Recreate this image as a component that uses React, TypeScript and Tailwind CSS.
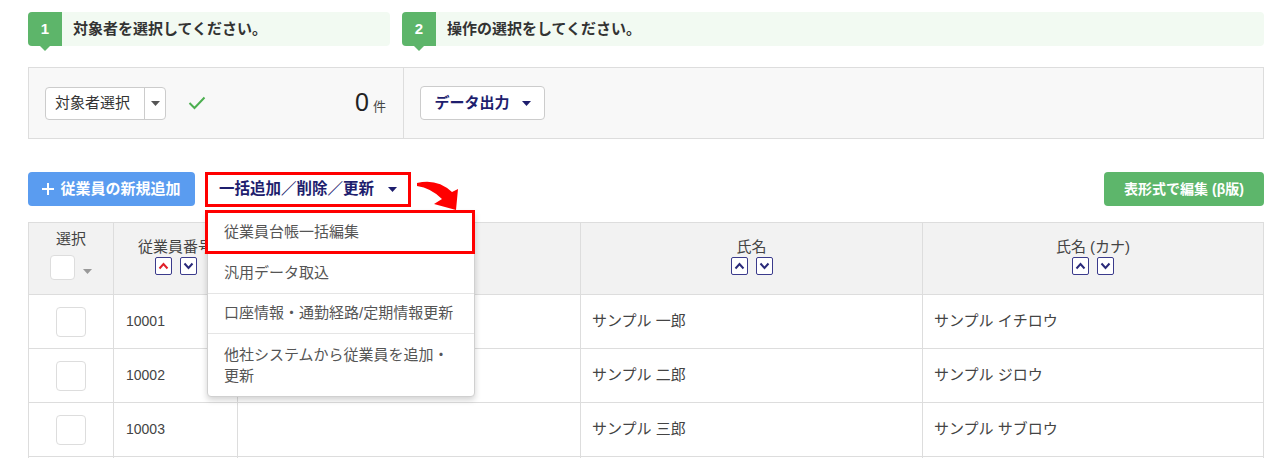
import React from 'react';

const FONT = { fontFamily: '"Liberation Sans", "Noto Sans CJK JP", sans-serif' };

const Chevron = ({ dir, color }: { dir: 'up' | 'down'; color: string }) => (
  <span className="inline-flex h-[18px] w-[17px] items-center justify-center rounded-[2px] border border-[#3b3b8c] bg-white">
    <svg width="11" height="8" viewBox="0 0 11 8">
      <path
        d={dir === 'up' ? 'M1.5 6.5 L5.5 2 L9.5 6.5' : 'M1.5 1.5 L5.5 6 L9.5 1.5'}
        fill="none"
        stroke={color}
        strokeWidth="2"
      />
    </svg>
  </span>
);

const SortButtons = ({ activeUp = false }: { activeUp?: boolean }) => (
  <div className="flex justify-center gap-[8px]">
    <Chevron dir="up" color={activeUp ? '#e0202a' : '#2a2a7a'} />
    <Chevron dir="down" color="#2a2a7a" />
  </div>
);

const Caret = ({ color = '#1e1e6e' }: { color?: string }) => (
  <svg width="9" height="5" viewBox="0 0 9 5">
    <path d="M0 0 H9 L4.5 5 Z" fill={color} />
  </svg>
);

const Step = ({ n, text, className }: { n: string; text: string; className: string }) => (
  <div className={`flex h-[34px] items-center rounded-[4px] bg-[#f2faf2] ${className}`}>
    <div className="relative flex h-full w-[34px] items-center justify-center rounded-l-[4px] bg-[#5db56a] text-[15px] font-bold text-white">
      {n}
      <span className="absolute -bottom-[5px] left-[12px] h-0 w-0 border-x-[5px] border-t-[5px] border-x-transparent border-t-[#5db56a]" />
    </div>
    <span className="ml-[11px] text-[15px] font-bold text-[#333]">{text}</span>
  </div>
);

const rows = [
  { no: '10001', name: 'サンプル 一郎', kana: 'サンプル イチロウ' },
  { no: '10002', name: 'サンプル 二郎', kana: 'サンプル ジロウ' },
  { no: '10003', name: 'サンプル 三郎', kana: 'サンプル サブロウ' },
];

const menuItems = [
  '汎用データ取込',
  '口座情報・通勤経路/定期情報更新',
];

export default function App() {
  return (
    <div className="h-[458px] overflow-hidden bg-white pl-[28px] pr-[16px] pt-[12px]" style={FONT}>
      {/* Steps */}
      <div className="flex gap-[12px]">
        <Step n="1" text="対象者を選択してください。" className="w-[362px]" />
        <Step n="2" text="操作の選択をしてください。" className="flex-1" />
      </div>

      {/* Selection panel */}
      <div className="mt-[21px] flex h-[72px] border border-[#dddddd] bg-[#f8f8f8]">
        <div className="flex w-[375px] items-center border-r border-[#dddddd] pl-[16px] pr-[17px]">
          <div className="flex h-[33px] w-[121px] items-center rounded-[4px] border border-[#cccccc] bg-white">
            <span className="flex-1 pl-[9px] text-[15px] text-[#333]">対象者選択</span>
            <span className="flex h-full w-[21px] items-center justify-center border-l border-[#cccccc]">
              <Caret color="#555" />
            </span>
          </div>
          <svg className="ml-[22px]" width="18" height="14" viewBox="0 0 18 14">
            <path d="M1.5 7 L6.5 12 L16.5 1.5" fill="none" stroke="#4caf50" strokeWidth="2" />
          </svg>
          <div className="ml-auto flex items-baseline">
            <span className="text-[25px] leading-none text-[#222]">0</span>
            <span className="ml-[4px] text-[13px] text-[#444]">件</span>
          </div>
        </div>
        <div className="flex items-center pl-[16px]">
          <button className="flex h-[34px] w-[125px] items-center justify-center gap-[12px] rounded-[4px] border border-[#cccccc] bg-white text-[15px] font-bold text-[#1e1e6e]">
            データ出力
            <Caret />
          </button>
        </div>
      </div>

      {/* Toolbar */}
      <div className="mt-[33px] flex h-[34px] items-center">
        <button className="flex h-[34px] w-[167px] items-center justify-center gap-[6px] rounded-[4px] bg-[#5a9cf0] text-[15px] font-bold text-white">
          <svg width="12" height="12" viewBox="0 0 12 12">
            <path d="M6 0 V12 M0 6 H12" stroke="white" strokeWidth="2" />
          </svg>
          従業員の新規追加
        </button>
        <div className="relative ml-[10px]">
          <button className="flex h-[35px] w-[206px] items-center justify-center gap-[14px] border-[3px] border-[#ff0000] bg-white text-[15.5px] font-bold text-[#1e1e6e]">
            一括追加／削除／更新
            <Caret />
          </button>
          {/* curved arrow */}
          <svg className="absolute left-[210px] top-[7px]" width="62" height="36" viewBox="0 0 62 36">
            <path
              d="M2 4 Q22 -1 37 13 L43 10 L41 31 L19 25 L27 20 Q16 9 2 7 Z"
              fill="#ff0000"
            />
          </svg>
          {/* dropdown */}
          <div className="absolute left-[2px] top-[39px] z-10 w-[268px] rounded-b-[4px] border border-[#d0d0d0] bg-white text-[15px] text-[#555] shadow-[0_3px_6px_rgba(0,0,0,0.18)]">
            <div className="relative flex h-[41px] items-center pl-[16px]">
              従業員台帳一括編集
              <span className="pointer-events-none absolute -bottom-[1px] -left-[3px] -right-[1px] -top-[2px] border-[3px] border-[#ff0000]" />
            </div>
            {menuItems.map((m) => (
              <div key={m} className="flex h-[40px] items-center border-t border-[#e5e5e5] pl-[16px]">
                {m}
              </div>
            ))}
            <div className="border-t border-[#e5e5e5] pb-[10px] pl-[16px] pr-[10px] pt-[10px] leading-[21px]">
              他社システムから従業員を追加・
              <br />
              更新
            </div>
          </div>
        </div>
        <button className="ml-auto flex h-[34px] w-[160px] items-center justify-center rounded-[4px] bg-[#5db66b] text-[14px] font-bold text-white">
          表形式で編集 (β版)
        </button>
      </div>

      {/* Table */}
      <table className="mt-[16px] w-full table-fixed border-collapse text-[15px] text-[#444]">
        <colgroup>
          <col className="w-[85px]" />
          <col className="w-[124px]" />
          <col className="w-[343px]" />
          <col className="w-[342px]" />
          <col />
        </colgroup>
        <thead>
          <tr className="h-[72px] bg-[#f2f2f2] font-normal">
            <th className="border border-[#dddddd] align-top pt-[6px] font-normal">
              <div className="leading-[20px]">選択</div>
              <div className="mt-[6px] flex items-center justify-center gap-[8px]">
                <span className="h-[25px] w-[25px] rounded-[4px] border border-[#dddddd] bg-white" />
                <span className="mt-[8px]">
                  <Caret color="#999" />
                </span>
              </div>
            </th>
            <th className="border border-[#dddddd] align-top pt-[14px] font-normal">
              <div className="leading-[20px]">従業員番号</div>
              <SortButtons activeUp />
            </th>
            <th className="border border-[#dddddd] font-normal" />
            <th className="border border-[#dddddd] align-top pt-[14px] font-normal">
              <div className="leading-[20px]">氏名</div>
              <SortButtons />
            </th>
            <th className="border border-[#dddddd] align-top pt-[14px] font-normal">
              <div className="leading-[20px]">氏名 (カナ)</div>
              <SortButtons />
            </th>
          </tr>
        </thead>
        <tbody>
          {rows.map((r) => (
            <tr key={r.no} className="h-[54px]">
              <td className="border border-[#dddddd]">
                <div className="flex justify-center">
                  <span className="h-[30px] w-[30px] rounded-[4px] border border-[#dddddd] bg-white" />
                </div>
              </td>
              <td className="border border-[#dddddd] pl-[12px] text-[14px]">{r.no}</td>
              <td className="border border-[#dddddd]" />
              <td className="border border-[#dddddd] pl-[11px]">{r.name}</td>
              <td className="border border-[#dddddd] pl-[11px]">{r.kana}</td>
            </tr>
          ))}
          <tr className="h-[54px]">
            <td className="border border-[#dddddd]" />
            <td className="border border-[#dddddd]" />
            <td className="border border-[#dddddd]" />
            <td className="border border-[#dddddd]" />
            <td className="border border-[#dddddd]" />
          </tr>
        </tbody>
      </table>
    </div>
  );
}
